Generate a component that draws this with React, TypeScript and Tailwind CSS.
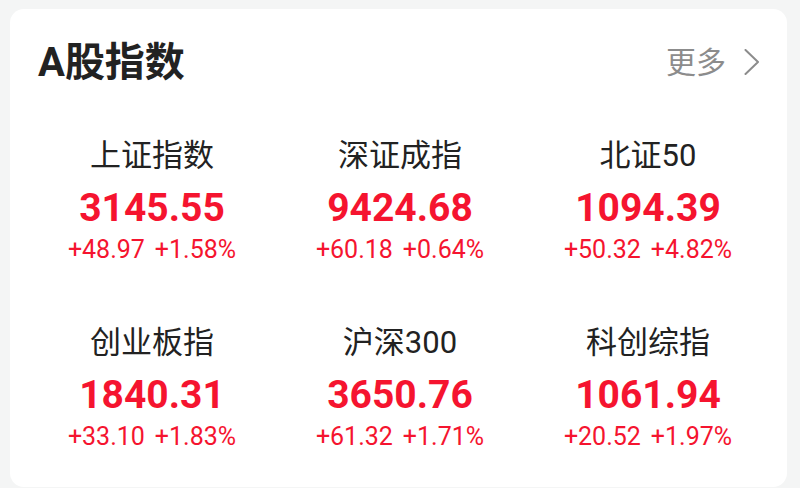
import React from "react";

const items = [
  { name: "上证指数", value: "3145.55", chg: "+48.97", pct: "+1.58%" },
  { name: "深证成指", value: "9424.68", chg: "+60.18", pct: "+0.64%" },
  { name: "北证50", value: "1094.39", chg: "+50.32", pct: "+4.82%" },
  { name: "创业板指", value: "1840.31", chg: "+33.10", pct: "+1.83%" },
  { name: "沪深300", value: "3650.76", chg: "+61.32", pct: "+1.71%" },
  { name: "科创综指", value: "1061.94", chg: "+20.52", pct: "+1.97%" },
];

export default function App() {
  return (
    <div
      className="w-[800px] h-[488px] overflow-hidden bg-[#f4f5f5] pt-[9px] pl-[10px]"
      style={{ fontFamily: 'Roboto, "Noto Sans CJK SC", sans-serif' }}
    >
      <div className="bg-white rounded-[14px] w-[777px] h-[478px] pt-[30px] pl-[28px] pr-[27px]">
        <div className="flex items-center justify-between">
          <h1 className="text-[40px] leading-[48px] font-bold text-[#222222]">A股指数</h1>
          <div className="flex items-center gap-[18px] text-[#8c8c8c] text-[30px] leading-[36px]">
            <span>更多</span>
            <svg width="16" height="26" viewBox="0 0 16 26" fill="none" className="mt-[-2px]">
              <path d="M1.5 1 L14 13 L1.5 25" stroke="#8c8c8c" strokeWidth="2" strokeLinecap="round" strokeLinejoin="round" />
            </svg>
          </div>
        </div>
        <div className="grid grid-cols-3 gap-y-[59px] mt-[50px] ml-[-10px] mr-[-12px]">
          {items.map((it) => (
            <div key={it.name} className="flex flex-col items-center">
              <div className="text-[31px] leading-[37px] text-[#222222]">{it.name}</div>
              <div className="mt-[11px] text-[39px] leading-[47px] font-bold text-[#f5142f]">{it.value}</div>
              <div className="mt-[3px] text-[25px] leading-[30px] text-[#f5142f] flex gap-[10px]">
                <span>{it.chg}</span>
                <span>{it.pct}</span>
              </div>
            </div>
          ))}
        </div>
      </div>
    </div>
  );
}
